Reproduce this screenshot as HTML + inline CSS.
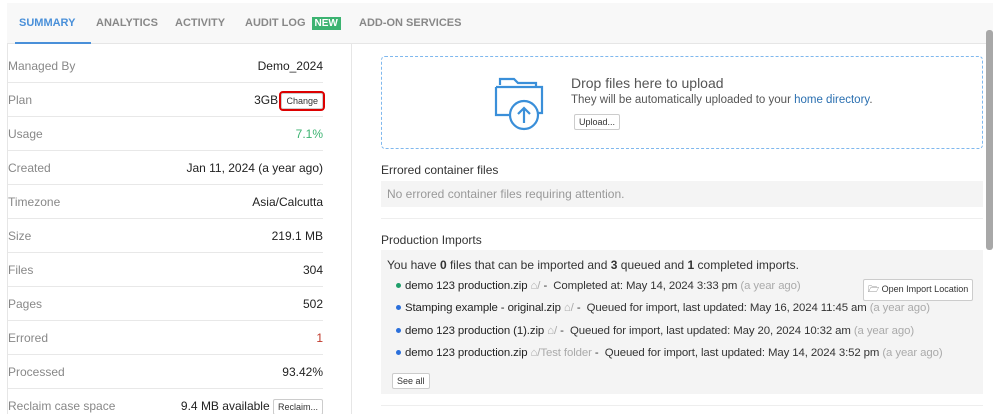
<!DOCTYPE html>
<html><head><style>
*{box-sizing:border-box;margin:0;padding:0}
html,body{width:1000px;height:414px;overflow:hidden}
body{background:#fff;font-family:"Liberation Sans",sans-serif;font-size:12px;color:#333;position:relative}
.tabs{position:absolute;left:7px;top:3px;width:986px;height:41px;background:#f8f8f8;border-bottom:1px solid #e6e6e6}
.tab{position:absolute;top:14px;font-size:11px;font-weight:bold;color:#888}
.new{background:#3cb371;color:#fff;padding:1px 3px;font-size:10px;margin-left:6px}
.ul{position:absolute;left:8px;top:39px;width:76px;height:2px;background:#4a90d9}
.divider{position:absolute;left:351px;top:44px;width:1px;height:370px;background:#e6e6e6}
.lb{position:absolute;left:7px;top:44px;width:1px;height:370px;background:#e6e6e6}
.row{position:absolute;left:8px;width:315px;height:34px;border-bottom:1px solid #e8e8e8;display:flex;align-items:center;justify-content:space-between}
.row .k{color:#888}
.row .v{color:#222}
.btn{border:1px solid #ccc;border-radius:2px;background:#fff;font-size:9px;padding:2px 4px;color:#333}
.drop{position:absolute;left:381px;top:56px;width:602px;height:93px;border:1px dashed #7fb8ee;border-radius:4px}
.h{position:absolute;left:381px;font-size:12px;color:#333}
.grey{position:absolute;left:381px;width:602px;background:#f4f4f4}
.item{position:absolute;left:396px;font-size:11.4px;white-space:nowrap;letter-spacing:-0.1px}
.item b{font-weight:normal;color:#222}
.dot{display:inline-block;width:5px;height:5px;border-radius:50%;margin-right:4px;vertical-align:middle}
.mute{color:#aaa}
.sb{position:absolute;left:986px;top:30px;width:7px;height:220px;background:#a8a8a8;border-radius:3px}
</style></head><body>
<div class="tabs">
<span class="tab" style="left:12px;color:#4a90d9">SUMMARY</span>
<span class="tab" style="left:89px">ANALYTICS</span>
<span class="tab" style="left:168px">ACTIVITY</span>
<span class="tab" style="left:238px">AUDIT LOG<span class="new">NEW</span></span>
<span class="tab" style="left:352px">ADD-ON SERVICES</span>
<div class="ul"></div>
</div>
<div class="lb"></div>
<div class="divider"></div>
<div class="row" style="top:49px"><span class="k">Managed By</span><span class="v">Demo_2024</span></div>
<div class="row" style="top:83px"><span class="k">Plan</span><span class="v">3GB <span class="btn" style="outline:2px solid #d00;outline-offset:0">Change</span></span></div>
<div class="row" style="top:117px"><span class="k">Usage</span><span class="v" style="color:#3cb371">7.1%</span></div>
<div class="row" style="top:151px"><span class="k">Created</span><span class="v">Jan 11, 2024 (a year ago)</span></div>
<div class="row" style="top:185px"><span class="k">Timezone</span><span class="v">Asia/Calcutta</span></div>
<div class="row" style="top:219px"><span class="k">Size</span><span class="v">219.1 MB</span></div>
<div class="row" style="top:253px"><span class="k">Files</span><span class="v">304</span></div>
<div class="row" style="top:287px"><span class="k">Pages</span><span class="v">502</span></div>
<div class="row" style="top:321px"><span class="k">Errored</span><span class="v" style="color:#c0392b">1</span></div>
<div class="row" style="top:355px"><span class="k">Processed</span><span class="v">93.42%</span></div>
<div class="row" style="top:389px"><span class="k">Reclaim case space</span><span class="v">9.4 MB available <span class="btn">Reclaim...</span></span></div>

<div class="drop"></div>
<svg style="position:absolute;left:494px;top:73px" width="60" height="58" viewBox="0 0 60 58" fill="none" stroke="#3a8fd9" stroke-width="2.2">
<path d="M6 12 v-6 h14 l4 4 h18 v4"/><path d="M2 14 h46 v26 h-10 M2 14 v28 h14"/><circle cx="30" cy="42" r="14" fill="#fff"/><path d="M30 50 v-15 M24 41 l6-6 6 6"/></svg>
<div style="position:absolute;left:571px;top:75px;font-size:14px;color:#555">Drop files here to upload</div>
<div style="position:absolute;left:571px;top:94px;font-size:11.5px;color:#555">They will be automatically uploaded to your <span style="color:#2a6fb0">home directory</span>.</div>
<span class="btn" style="position:absolute;left:574px;top:114px">Upload...</span>

<div class="h" style="top:163px">Errored container files</div>
<div class="grey" style="top:181px;height:26px"><span style="position:absolute;left:6px;top:6px;color:#999">No errored container files requiring attention.</span></div>
<div style="position:absolute;left:381px;top:218px;width:602px;height:1px;background:#eee"></div>
<div class="h" style="top:233px">Production Imports</div>
<div class="grey" style="top:250px;height:144px"></div>
<div style="position:absolute;left:387px;top:258px">You have <b>0</b> files that can be imported and <b>3</b> queued and <b>1</b> completed imports.</div>
<div class="item" style="top:280px"><span class="dot" style="background:#1e9e6a"></span><b>demo 123 production.zip</b> <span class="mute">⌂/</span> -&nbsp; Completed at: May 14, 2024 3:33 pm <span class="mute">(a year ago)</span></div>
<span class="btn" style="position:absolute;left:863px;top:279px;font-size:9px">🗁 Open Import Location</span>
<div class="item" style="top:302px"><span class="dot" style="background:#2a6fdb"></span><b>Stamping example - original.zip</b> <span class="mute">⌂/</span> -&nbsp; Queued for import, last updated: May 16, 2024 11:45 am <span class="mute">(a year ago)</span></div>
<div class="item" style="top:325px"><span class="dot" style="background:#2a6fdb"></span><b>demo 123 production (1).zip</b> <span class="mute">⌂/</span> -&nbsp; Queued for import, last updated: May 20, 2024 10:32 am <span class="mute">(a year ago)</span></div>
<div class="item" style="top:347px"><span class="dot" style="background:#2a6fdb"></span><b>demo 123 production.zip</b> <span class="mute">⌂/Test folder</span> -&nbsp; Queued for import, last updated: May 14, 2024 3:52 pm <span class="mute">(a year ago)</span></div>
<span class="btn" style="position:absolute;left:392px;top:373px">See all</span>
<div style="position:absolute;left:381px;top:405px;width:602px;height:1px;background:#eee"></div>
<div class="sb"></div>
</body></html>
